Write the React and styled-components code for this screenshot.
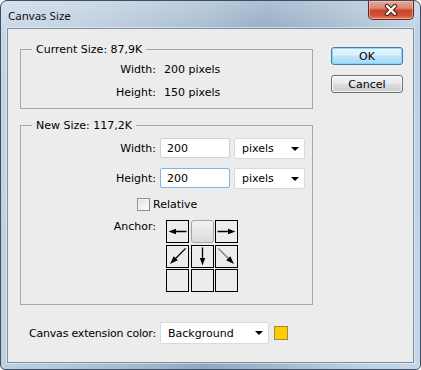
import React from 'react';
import styled, { createGlobalStyle } from 'styled-components';

const Global = createGlobalStyle`
  html, body { margin: 0; padding: 0; background: #ffffff; }
  body { width: 421px; height: 370px; overflow: hidden; }
  *, *::before, *::after { box-sizing: border-box; }
`;

const Window = styled.div`
  width: 421px;
  height: 370px;
  border: 1px solid #3c4e63;
  border-radius: 7px 7px 5px 5px;
  background:
    linear-gradient(180deg, rgba(255,255,255,0.28) 0px, rgba(255,255,255,0) 40px),
    linear-gradient(100deg, #c7d6e6 0%, #b9cadc 22%, #a3b9cf 42%, #8fa8c1 55%, #a2b8ce 70%, #bccfe1 86%, #c8d7e7 100%);
  display: flex;
  flex-direction: column;
  padding: 0 6px 6px 6px;
  font-family: "DejaVu Sans", sans-serif;
  font-size: 11px;
  color: #000;
  overflow: hidden;
`;

const TitleBar = styled.div`
  height: 27px;
  display: flex;
  align-items: flex-start;
  justify-content: space-between;
  flex-shrink: 0;
`;

const Title = styled.div`
  font-family: "Noto Sans", sans-serif;
  font-size: 11.5px;
  line-height: 16px;
  padding: 7px 0 0 1px;
  color: #111;
`;

const CloseButton = styled.div`
  width: 46px;
  height: 19px;
  border: 1px solid #5e2a22;
  border-top: none;
  border-radius: 0 0 5px 5px;
  background: linear-gradient(180deg, #e8a898 0%, #dc8572 40%, #c9442d 52%, #cf5236 80%, #e3835e 100%);
  box-shadow: inset 0 0 0 1px rgba(255, 220, 210, 0.45);
  display: flex;
  align-items: center;
  justify-content: center;
`;

const Client = styled.div`
  flex: 1;
  border: 1px solid #7d8fa3;
  box-shadow: 0 0 0 1px rgba(255, 255, 255, 0.45);
  background: #ececec;
  display: flex;
  flex-direction: column;
  padding: 0 10px 0 12px;
`;

const TopSection = styled.div`
  display: flex;
  align-items: flex-start;
`;

const LeftColumn = styled.div`
  width: 293px;
  padding-top: 14px;
  display: flex;
  flex-direction: column;
  gap: 10px;
`;

const ButtonColumn = styled.div`
  width: 72px;
  margin-left: 18px;
  padding-top: 18px;
  display: flex;
  flex-direction: column;
  gap: 10px;
`;

const PushButton = styled.div`
  height: 18px;
  border: 1px solid ${p => (p.$default ? '#3c7fb1' : '#707070')};
  border-radius: 3px;
  background: ${p =>
    p.$default
      ? 'linear-gradient(180deg, #eaf6fd 0%, #d9f0fc 45%, #bee6fd 50%, #a7d9f5 100%)'
      : 'linear-gradient(180deg, #f2f2f2 0%, #ebebeb 45%, #dddddd 50%, #cfcfcf 100%)'};
  box-shadow: inset 0 0 0 1px ${p => (p.$default ? 'rgba(120, 210, 250, 0.8)' : 'rgba(255,255,255,0.7)')};
  display: flex;
  align-items: center;
  justify-content: center;
  line-height: 13px;
`;

const Group = styled.fieldset`
  margin: 0;
  padding: 6px 0 ${p => p.$pb}px 0;
  border: 1px solid #a6a6a6;
  min-width: 0;
`;

const Legend = styled.legend`
  margin-left: 11px;
  padding: 0 4px;
  line-height: 13px;
  font-size: 11px;
`;

const InfoGrid = styled.div`
  display: grid;
  grid-template-columns: 135px auto;
  column-gap: 8px;
  row-gap: 7px;
  line-height: 16px;
`;

const Label = styled.div`
  text-align: right;
  white-space: nowrap;
  line-height: ${p => p.$lh || 'inherit'};
`;

const Value = styled.div`
  white-space: nowrap;
`;

const FormGrid = styled.div`
  display: grid;
  grid-template-columns: 135px 70px 71px;
  column-gap: 4px;
  row-gap: 9px;
  align-items: center;
`;

const TextInput = styled.input`
  width: 70px;
  height: 20px;
  margin: 0;
  padding: 0 0 0 6px;
  border: 1px solid ${p => (p.$focused ? '#7eb4ea' : '#d0d0d0')};
  border-radius: 2px;
  background: #fff;
  font-family: "DejaVu Sans", sans-serif;
  font-size: 11px;
  color: #000;
  outline: none;
  align-self: start;
`;

const Dropdown = styled.div`
  width: ${p => p.$w}px;
  height: ${p => p.$h}px;
  border: 1px solid #dadada;
  border-radius: 2px;
  background: #fff;
  display: flex;
  align-items: center;
  justify-content: space-between;
  padding: 0 5px 0 7px;
  white-space: nowrap;
`;

const Caret = styled.span`
  width: 0;
  height: 0;
  border-left: 4px solid transparent;
  border-right: 4px solid transparent;
  border-top: 4px solid #000;
`;

const CheckRow = styled.div`
  margin-top: 9px;
  padding-left: 116px;
  display: flex;
  align-items: center;
  gap: 3px;
  line-height: 13px;
`;

const CheckBox = styled.span`
  width: 13px;
  height: 13px;
  border: 1px solid #8e8f8f;
  background: linear-gradient(135deg, #dcdcdc 0%, #f4f4f4 60%, #ffffff 100%);
  box-shadow: inset 0 0 0 1px #f4f4f4;
`;

const AnchorRow = styled.div`
  margin-top: 9px;
  display: grid;
  grid-template-columns: 135px auto;
  column-gap: 10px;
  align-items: start;
`;

const AnchorGrid = styled.div`
  display: grid;
  grid-template-columns: repeat(3, 23px);
  grid-auto-rows: 23px;
  gap: 1.5px;
`;

const Cell = styled.div`
  border: 1px solid ${p => (p.$selected ? '#a3a3a3' : '#000')};
  border-radius: ${p => (p.$selected ? '3px' : '0')};
  background: ${p => (p.$selected ? 'linear-gradient(180deg, #f3f3f3 0%, #e6e6e6 55%, #dadada 100%)' : '#ececec')};
  display: flex;
  align-items: center;
  justify-content: center;
`;

const BottomRow = styled.div`
  margin-top: 17px;
  padding-left: 9px;
  display: flex;
  align-items: center;
`;

const BottomLabel = styled.div`
  width: 127px;
  margin-right: 4px;
  white-space: nowrap;
  letter-spacing: -0.2px;
`;

const Swatch = styled.div`
  width: 14px;
  height: 14px;
  margin-left: 5px;
  background: #ffcc00;
  border: 1px solid #a08a4a;
`;

const Arrow = ({ angle, faint }) => (
  <svg width="21" height="21" viewBox="0 0 21 21">
    <g transform={`rotate(${angle} 10.5 10.5)`}>
      <line x1="1.5" y1="10.5" x2="14" y2="10.5" stroke={faint ? '#555' : '#000'} strokeWidth="1.3" />
      <polygon points="19.5,10.5 12,7.8 12,13.2" fill="#000" />
    </g>
  </svg>
);

const DiagArrow = ({ angle, faint }) => (
  <svg width="21" height="21" viewBox="0 0 21 21">
    <g transform={`rotate(${angle} 10.5 10.5)`}>
      <line x1="-1" y1="10.5" x2="15" y2="10.5" stroke={faint ? '#777' : '#000'} strokeWidth="1.3" />
      <polygon points="21,10.5 13,7.6 13,13.4" fill="#000" />
    </g>
  </svg>
);

const CloseGlyph = () => (
  <svg width="16" height="12" viewBox="0 0 16 12">
    <path d="M4 2 L12 10 M12 2 L4 10" stroke="#4a1a12" strokeWidth="4.4" strokeLinecap="round" />
    <path d="M4 2 L12 10 M12 2 L4 10" stroke="#ffffff" strokeWidth="2.4" strokeLinecap="round" />
  </svg>
);

const anchorCells = [
  { key: 'tl', content: <Arrow angle={180} /> },
  { key: 'tc', selected: true },
  { key: 'tr', content: <Arrow angle={0} /> },
  { key: 'ml', content: <DiagArrow angle={135} /> },
  { key: 'mc', content: <Arrow angle={90} /> },
  { key: 'mr', content: <DiagArrow angle={45} faint /> },
  { key: 'bl' },
  { key: 'bc' },
  { key: 'br' },
];

export default function App() {
  return (
    <>
      <Global />
      <Window>
        <TitleBar>
          <Title>Canvas Size</Title>
          <CloseButton>
            <CloseGlyph />
          </CloseButton>
        </TitleBar>
        <Client>
          <TopSection>
            <LeftColumn>
              <Group $pb={7}>
                <Legend>Current Size: 87,9K</Legend>
                <InfoGrid>
                  <Label>Width:</Label>
                  <Value>200 pixels</Value>
                  <Label>Height:</Label>
                  <Value>150 pixels</Value>
                </InfoGrid>
              </Group>
              <Group $pb={12}>
                <Legend>New Size: 117,2K</Legend>
                <FormGrid>
                  <Label>Width:</Label>
                  <TextInput defaultValue="200" readOnly />
                  <Dropdown $w={71} $h={21}>
                    pixels
                    <Caret />
                  </Dropdown>
                  <Label>Height:</Label>
                  <TextInput defaultValue="200" readOnly $focused />
                  <Dropdown $w={71} $h={21}>
                    pixels
                    <Caret />
                  </Dropdown>
                </FormGrid>
                <CheckRow>
                  <CheckBox />
                  <span>Relative</span>
                </CheckRow>
                <AnchorRow>
                  <Label $lh="13px">Anchor:</Label>
                  <AnchorGrid>
                    {anchorCells.map(c => (
                      <Cell key={c.key} $selected={c.selected}>
                        {c.content}
                      </Cell>
                    ))}
                  </AnchorGrid>
                </AnchorRow>
              </Group>
            </LeftColumn>
            <ButtonColumn>
              <PushButton $default>OK</PushButton>
              <PushButton>Cancel</PushButton>
            </ButtonColumn>
          </TopSection>
          <BottomRow>
            <BottomLabel>Canvas extension color:</BottomLabel>
            <Dropdown $w={109} $h={22}>
              Background
              <Caret />
            </Dropdown>
            <Swatch />
          </BottomRow>
        </Client>
      </Window>
    </>
  );
}
